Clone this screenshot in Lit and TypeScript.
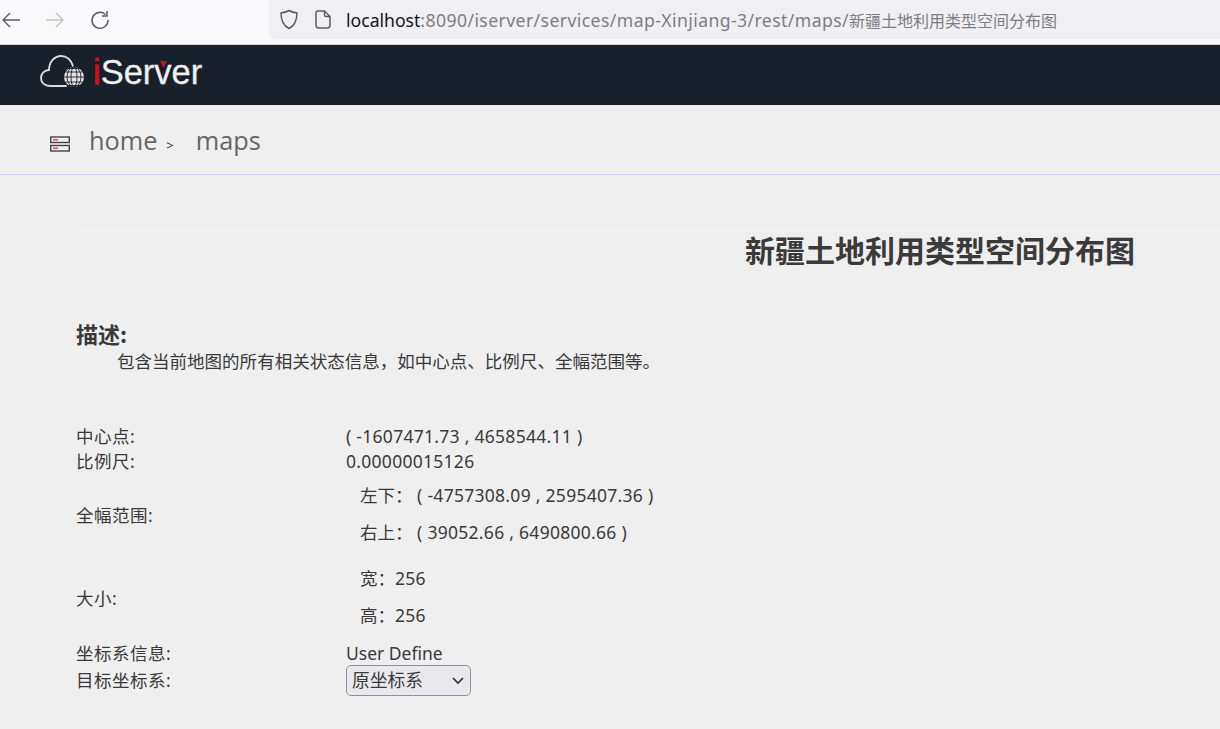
import { LitElement, html, css } from "lit";
import { customElement } from "lit/decorators.js";

@customElement("app-root")
export class AppRoot extends LitElement {
  static styles = css`
    :host { display: block; width: 1220px; height: 729px; overflow: hidden; background: #efefef; font-family: "Noto Sans", "Noto Sans CJK SC", sans-serif; color: #333; }
    .chrome { height: 45px; box-sizing: border-box; background: #f9f9fb; border-bottom: 1px solid #cfcfd4; display: flex; align-items: flex-start; }
    .nav { display: flex; width: 269px; height: 39px; align-items: center; flex: none; }
    .nav svg { display: block; flex: none; }
    .back { margin-left: 1px; }
    .fwd { margin-left: 24px; }
    .reload { margin-left: 25px; }
    .url { flex: 1; height: 39px; background: #f0f0f4; border-radius: 0 0 0 6px; display: flex; align-items: center; padding-left: 10px; font-size: 17.6px; color: #7d7d85; white-space: nowrap; }
    .url b { font-weight: 400; color: #15141a; }
    .url .path { letter-spacing: 0.42px; }
    .url .cjk { font-size: 16px; }
    .url .page { margin: 0 15px 0 16px; }
    .header { height: 60px; background: #18202b; display: flex; align-items: center; padding-left: 40px; }
    .logo { margin-bottom: 6px; display: block; flex: none; }
    .brand { font-family: "Liberation Sans", sans-serif; font-size: 34.5px; color: #f0f0f0; margin: 0 0 6px 8px; line-height: 40px; position: relative; -webkit-text-stroke: 0.3px #f0f0f0; }
    .brand i { font-style: normal; color: #d0101f; -webkit-text-stroke: 0.8px #d0101f; }
    .tri { position: absolute; left: 67px; top: 9px; }
    .crumbs { height: 70px; box-sizing: border-box; border-bottom: 1px solid #c8d8f6; display: flex; align-items: center; padding: 0 0 0 50px; color: #666; font-size: 25.3px; font-family: "Open Sans", "Noto Sans", sans-serif; }
    .crumbs .srv { margin: 8px 19px 0 0; display: block; }
    .sep { font-size: 13px; color: #333; margin: 11px 22px 0 9px; }
    .titlewrap { margin: 56px 0 0 80px; border-top: 1px solid #f4f4f6; text-align: right; padding-right: 85px; }
    h1 { margin: 0; font-size: 30px; line-height: 34px; font-weight: 700; color: #3a3a3a; font-family: "Noto Sans CJK SC", sans-serif; }
    .main { padding-left: 76px; font-size: 17.5px; color: #3a3a3a; }
    h2 { margin: 52px 0 0; font-size: 22px; line-height: 30px; font-weight: 700; font-family: "Noto Sans CJK SC", sans-serif; }
    .desc { margin: 1px 0 0 41px; line-height: 24px; font-family: "Noto Sans CJK SC", sans-serif; font-size: 17.53px; }
    .grid { margin-top: 51px; display: grid; grid-template-columns: 270px 1fr; align-items: center; line-height: 25px; }
    .label { letter-spacing: 0.5px; }
    .num { letter-spacing: 0.28px; }
    .list { padding: 3px 0 5px; }
    .list.big { padding: 4px 0 7px; }
    .list div { height: 37px; line-height: 37px; padding-left: 14px; }
    .label.top { align-self: start; line-height: 30px; margin-top: -1px; }
    select { appearance: none; width: 125px; height: 31px; box-sizing: border-box; background: #e9e9ed; border: 1px solid #8f8f9d; border-radius: 5px; font: inherit; font-size: 17.8px; color: #3a3a3a; padding: 0 0 0 5px; display: block; }
    .selwrap { position: relative; width: 125px; height: 31px; margin-top: -1px; }
    .selwrap svg { position: absolute; right: 7px; top: 11px; pointer-events: none; }
  `;

  render() {
    return html`
      <div class="chrome">
        <div class="nav">
          <svg class="back" width="20" height="20" viewBox="0 0 20 20" fill="none" stroke="#5b5b66" stroke-width="1.4"><path d="M19 10H2M9 3l-7 7 7 7"/></svg>
          <svg class="fwd" width="20" height="20" viewBox="0 0 20 20" fill="none" stroke="#c4c4c8" stroke-width="1.4"><path d="M1 10h17M11 3l7 7-7 7"/></svg>
          <svg class="reload" width="20" height="20" viewBox="0 0 20 20" fill="none" stroke="#5b5b66" stroke-width="1.5"><path d="M15.5 4.500A8 8 0 1 0 18 10"/><path d="M17 1v5h-5"/></svg>
        </div>
        <div class="url">
          <svg width="20" height="21" viewBox="0 0 20 21" fill="none" stroke="#5b5b66" stroke-width="1.5"><path d="M10 1.500c2.500 1.500 5 2.200 8 2.500 0 7-2 12.500-8 15.500C4 16.500 2 11 2 4c3-.3 5.500-1 8-2.500z" stroke-linejoin="round"/></svg>
          <svg class="page" width="16" height="19" viewBox="0 0 16 19" fill="none" stroke="#5b5b66" stroke-width="1.5"><path d="M3 1h6.500L15 6.500V15a3 3 0 0 1-3 3H4a3 3 0 0 1-3-3V3a2 2 0 0 1 2-2z" stroke-linejoin="round"/><path d="M9.500 1v4a1.500 1.500 0 0 0 1.500 1.500h4"/></svg>
          <span><b>localhost</b><span class="path">:8090/iserver/services/map-Xinjiang-3/rest/maps/</span><span class="cjk">新疆土地利用类型空间分布图</span></span>
        </div>
      </div>
      <div class="header">
        <svg class="logo" width="45" height="34" viewBox="0 0 45 34" fill="none">
          <path d="M26 31H10C4.500 31 1 27.500 1 23c0-4.500 3.500-8 8-8C9 7.500 14 1 21 1c6 0 10 4 12 10" stroke="#dcdcdc" stroke-width="1.800" stroke-linecap="round"/>
          <circle cx="34" cy="22" r="10" fill="#e4e4e4"/>
          <g stroke="#18202b" stroke-width=".9" fill="none">
            <ellipse cx="34" cy="22" rx="3" ry="10"/>
            <ellipse cx="34" cy="22" rx="7" ry="10"/>
            <path d="M24 22h20M25.500 17h17M25.500 27h17M28 13.500h12M28 30.500h12"/>
          </g>
        </svg>
        <span class="brand"><i>i</i>Server<svg class="tri" width="7" height="7" viewBox="0 0 7 7"><path d="M0 0h7L3.500 7z" fill="#d0101f"/></svg></span>
      </div>
      <div class="crumbs">
        <svg class="srv" width="20" height="16" viewBox="0 0 20 16" fill="none" stroke="#444" stroke-width="1.4">
          <rect x=".7" y="1" width="18.600" height="5.500"/>
          <rect x=".7" y="9.500" width="18.600" height="5.500"/>
          <path d="M3 3.700h5M3 12.200h5" stroke="#d9534f"/>
        </svg>
        <span>home</span><span class="sep">&gt;</span><span>maps</span>
      </div>
      <div class="titlewrap"><h1>新疆土地利用类型空间分布图</h1></div>
      <div class="main">
        <h2>描述:</h2>
        <p class="desc">包含当前地图的所有相关状态信息，如中心点、比例尺、全幅范围等。</p>
        <div class="grid">
          <span class="label">中心点:</span><span class="num">( -1607471.73 , 4658544.11 )</span>
          <span class="label">比例尺:</span><span class="num">0.00000015126</span>
          <span class="label">全幅范围:</span>
          <div class="list"><div>左下： <span class="num">( -4757308.09 , 2595407.36 )</span></div><div>右上： <span class="num">( 39052.66 , 6490800.66 )</span></div></div>
          <span class="label">大小:</span>
          <div class="list big"><div>宽：<span class="num">256</span></div><div>高：<span class="num">256</span></div></div>
          <span class="label">坐标系信息:</span><span>User Define</span>
          <span class="label top">目标坐标系:</span>
          <div class="selwrap">
            <select><option>原坐标系</option></select>
            <svg width="12" height="9" viewBox="0 0 12 9" fill="none" stroke="#333" stroke-width="1.700"><path d="M1 2l5 5 5-5"/></svg>
          </div>
        </div>
      </div>
    `;
  }
}
